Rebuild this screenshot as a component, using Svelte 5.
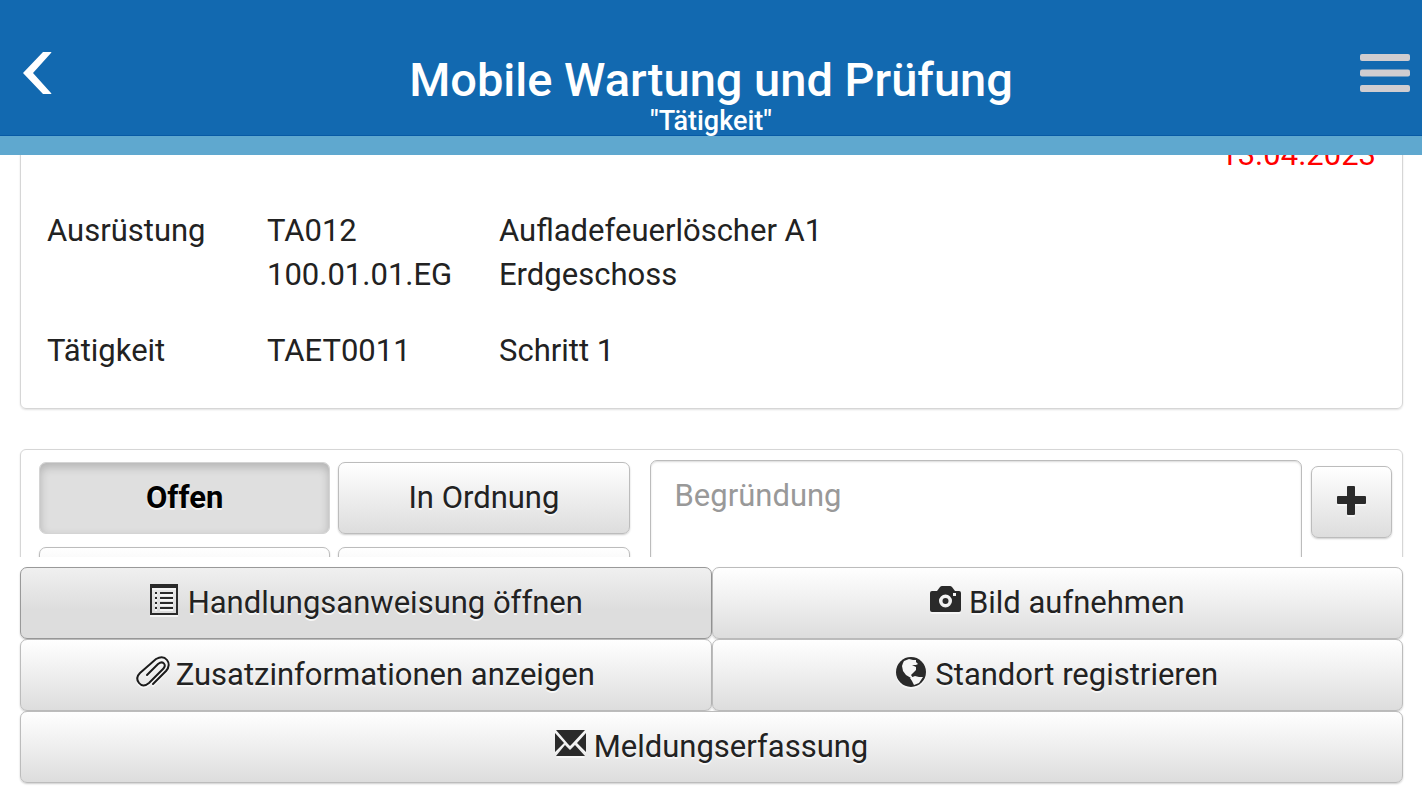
<script>
  import { onMount } from 'svelte';

  const groups = [
    {
      label: 'Ausrüstung',
      rows: [
        { code: 'TA012', text: 'Aufladefeuerlöscher A1' },
        { code: '100.01.01.EG', text: 'Erdgeschoss' }
      ]
    },
    {
      label: 'Tätigkeit',
      rows: [{ code: 'TAET0011', text: 'Schritt 1' }]
    }
  ];

  const actions = [
    { icon: 'list', text: 'Handlungsanweisung öffnen', active: true },
    { icon: 'camera', text: 'Bild aufnehmen' },
    { icon: 'clip', text: 'Zusatzinformationen anzeigen' },
    { icon: 'globe', text: 'Standort registrieren' },
    { icon: 'mail', text: 'Meldungserfassung', wide: true }
  ];

  let status = 'open';
  let reason = '';
  let content;

  // skip past the top of the order card
  onMount(() => {
    content.scrollTop = 64;
  });
</script>

<div class="page">
  <header>
    <button class="back" aria-label="Zurück">
      <svg width="30" height="42" viewBox="0 0 30 42">
        <path d="M20 0h8q1 0 0 1L10 21l18 20q1 1 0 1h-8L0 21z" fill="#fff" />
      </svg>
    </button>
    <div class="title">
      <h1>Mobile Wartung und Prüfung</h1>
      <p>"Tätigkeit"</p>
    </div>
    <button class="menu" aria-label="Menü">
      <svg width="50" height="38" viewBox="0 0 50 38" fill="#d0cdd0">
        <rect width="50" height="7" rx="2" />
        <rect y="15.5" width="50" height="7" rx="2" />
        <rect y="31" width="50" height="7" rx="2" />
      </svg>
    </button>
  </header>

  <main bind:this={content}>
    <section class="card details">
      <div class="date">13.04.2023</div>
      {#each groups as group}
        <div class="group">
          <div>{group.label}</div>
          <div class="rows">
            {#each group.rows as row}
              <div>{row.code}</div>
              <div>{row.text}</div>
            {/each}
          </div>
        </div>
      {/each}
    </section>

    <section class="card form">
      <div class="states">
        <button class="btn" class:pressed={status === 'open'} onclick={() => (status = 'open')}>Offen</button>
        <button class="btn" class:pressed={status === 'ok'} onclick={() => (status = 'ok')}>In Ordnung</button>
        <button class="btn" aria-label="Mangel"></button>
        <button class="btn" aria-label="Entfällt"></button>
      </div>
      <textarea placeholder="Begründung" aria-label="Begründung" bind:value={reason}></textarea>
      <button class="btn add" aria-label="Hinzufügen">
        <svg width="30" height="32" viewBox="0 0 30 32">
          <path d="M11 0h6q1 0 1 1v9h10q1 0 1 1v6q0 1-1 1H18v10q0 1-1 1h-6q-1 0-1-1V18H1q-1 0-1-1v-6q0-1 1-1h9V1q0-1 1-1z" />
        </svg>
      </button>
    </section>
  </main>

  <footer>
    {#each actions as action}
      <button class="btn" class:active={action.active} class:wide={action.wide}>
        <svg class="icon" width="32" height="32" viewBox="0 0 32 32">
          {#if action.icon === 'list'}
            <path d="M1 0h28v31H1zM3 4v25h24V4z" fill-rule="evenodd" />
            <path d="M6 8h2v2H6zM11 8h13v2H11zM6 13h2v2H6zM11 13h13v2H11zM6 18h2v2H6zM11 18h13v2H11zM6 23h2v2H6zM11 23h13v2H11z" />
          {:else if action.icon === 'camera'}
            <path
              d="M2 7h5l3-4q1-1 2-1h8q1 0 2 1l3 4h4q2 0 2 2v17q0 2-2 2H2q-2 0-2-2V9q0-2 2-2zM15.500 10.500a6.500 6.500 0 1 0 0 13a6.500 6.500 0 0 0 0-13zM23 9v3h3V9z"
              fill-rule="evenodd"
            />
            <circle cx="15.5" cy="17" r="3" />
          {:else if action.icon === 'clip'}
            <path
              d="M16 28L29 15q5-6 1-11T19 3L3 17q-5 5-1 10t10 0L26 13q3-3 1-5.500t-6 .5L10 19"
              fill="none"
              stroke="#1c1c1c"
              stroke-width="2"
              stroke-linecap="round"
            />
          {:else if action.icon === 'globe'}
            <circle cx="15" cy="16" r="15" />
            <path
              class="land"
              d="M8 5l5-2 4 1 3 0 0 2 2 2-2 1-4 0 4 2 0 3-3 3-2 2 2 3-2 0-5-3-3-4-1-5 1-3zM14 22l5-2 4 1 4 0-4 6-5 2-2-4z"
            />
          {:else}
            <path d="M1 2h29L17 16l-2 2-2-2zM0 5l9 10-9 9zM31 5v19l-9-9zM1 28l9-11 5 5 5-5 10 11z" />
          {/if}
        </svg>
        <span>{action.text}</span>
      </button>
    {/each}
  </footer>
</div>

<style>
  :global(body) {
    margin: 0;
    background: #fff;
  }

  .page {
    display: flex;
    flex-direction: column;
    height: 100vh;
    font-family: Roboto, 'Liberation Sans', sans-serif;
    font-size: 31px;
    line-height: 44px;
    color: #222;
  }

  * {
    box-sizing: border-box;
  }

  button,
  textarea {
    font: inherit;
    color: inherit;
  }

  header {
    display: grid;
    grid-template-columns: 80px 1fr 80px;
    height: 155px;
    padding: 52px 12px 0;
    background: #1269b0;
    border-bottom: 19px solid #5fa8cf;
    box-shadow: inset 0 -1px #075aa5;
    color: #fff;
    flex-shrink: 0;
  }

  header button {
    align-self: start;
    padding: 0;
    border: 0;
    background: none;
    line-height: 0;
  }

  .back {
    padding-left: 11px;
    text-align: left;
  }

  .menu {
    padding-top: 2px;
    text-align: right;
  }

  .title {
    text-align: center;
  }

  h1 {
    margin: 0;
    font-size: 47px;
    font-weight: 500;
    line-height: 56px;
  }

  p {
    margin: 0;
    font-size: 27px;
    font-weight: 500;
    line-height: 26px;
  }

  main {
    flex: 1;
    min-height: 0;
    padding: 16px 19px 16px 20px;
    overflow-y: auto;
    scrollbar-width: none;
  }

  .card {
    border: 1px solid #d6d6d6;
    border-radius: 6px;
    box-shadow: 0 1px 2px rgba(0, 0, 0, 0.12);
  }

  .details {
    display: flex;
    flex-direction: column;
    gap: 32px;
    padding: 25px 26px 35px;
  }

  .date {
    color: #f00;
    text-align: right;
  }

  .group {
    display: grid;
    grid-template-columns: 220px 1fr;
  }

  .rows {
    display: grid;
    grid-template-columns: 232px 1fr;
  }

  .form {
    display: grid;
    grid-template-columns: 12fr 13fr 81px;
    align-items: start;
    margin-top: 40px;
    padding: 10px 10px 20px 18px;
  }

  .states {
    display: grid;
    grid-template-columns: 1fr 1fr;
    gap: 13px 8px;
    margin-right: 20px;
    padding-top: 2px;
  }

  .btn {
    display: flex;
    align-items: center;
    justify-content: center;
    height: 72px;
    padding: 0;
    border: 1px solid #bcbcbc;
    border-radius: 7px;
    background: linear-gradient(#fff, #ddd);
    box-shadow: 0 1px 2px rgba(0, 0, 0, 0.2);
    text-shadow: 0 2px 0 #f6f6f6;
  }

  .btn svg {
    fill: #2a2a2a;
    filter: drop-shadow(0 2px 0 #f6f6f6);
    overflow: visible;
  }

  .btn .land {
    fill: #f6f6f6;
  }

  .pressed {
    border-color: #d4d4d4;
    background: #dfdfdf;
    box-shadow: inset 0 4px 10px rgba(0, 0, 0, 0.2);
    font-weight: 700;
    color: #000;
  }

  textarea {
    height: 166px;
    margin-right: 9px;
    padding: 13px 24px;
    border: 1px solid #bcbcbc;
    border-radius: 7px;
    box-shadow: inset 0 1px 2px rgba(0, 0, 0, 0.15);
    resize: none;
  }

  textarea::placeholder {
    color: #999;
  }

  .add {
    margin-top: 6px;
  }

  footer {
    display: grid;
    grid-template-columns: 1fr 1fr;
    padding: 10px 19px 17px 20px;
    flex-shrink: 0;
  }

  .icon {
    margin: 0 7px 6px 0;
  }

  .active {
    border-color: #999;
    background: linear-gradient(#f0f0f0, #ddd 60%);
  }

  .wide {
    grid-column: span 2;
  }
</style>
